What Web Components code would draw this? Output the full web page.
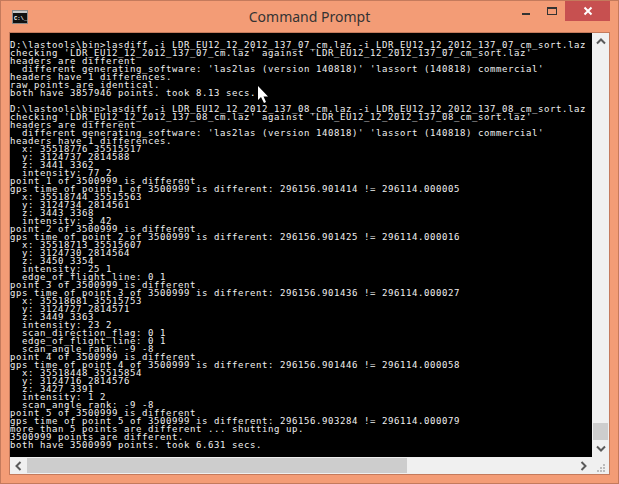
<!DOCTYPE html>
<html>
<head>
<meta charset="utf-8">
<title>Command Prompt</title>
<style>
  html, body { margin: 0; padding: 0; background: #f39c76; }
</style>
</head>
<body>
<template id="chrome-window-tpl">
  <style>
    :host {
      display: flex;
      flex-direction: column;
      box-sizing: border-box;
      position: relative;
      width: 619px;
      height: 484px;
      background: #f39c76;
      border: 1px solid #c47a5c;
      overflow: hidden;
    }
    .titlebar {
      height: 31px;
      display: grid;
      grid-template-columns: 1fr auto 1fr;
      align-items: start;
    }
    .icon { display: block; margin: 9px 0 0 11px; }
    .title {
      font: 14px/1 "Noto Sans", "Open Sans", sans-serif;
      color: #333;
      padding-top: 9px;
    }
    .buttons { justify-self: end; display: flex; margin-right: 8px; }
    .btn { width: 26px; height: 20px; display: flex; align-items: center; justify-content: center; }
    .btn.close { width: 45px; background: #c75050; }
    .client {
      flex: 1;
      margin: 0 8px 8px;
      border: 1px solid #c47a5c;
      min-height: 0;
    }
  </style>
  <div class="titlebar">
    <svg class="icon" width="16" height="14" viewBox="0 0 16 14">
      <rect x="0.5" y="0.5" width="15" height="13" fill="#111" stroke="#8a8a8a"/>
      <rect x="1" y="1" width="14" height="2" fill="#c8c8c8"/>
      <text x="2" y="10" font-family="Liberation Mono" font-size="5.5" font-weight="700" fill="#fff">C:\_</text>
    </svg>
    <div class="title"><slot name="title"></slot></div>
    <div class="buttons">
      <div class="btn">
        <svg width="10" height="10" viewBox="0 0 10 10"><rect x="1" y="7" width="8" height="2" fill="#333"/></svg>
      </div>
      <div class="btn">
        <svg width="12" height="10" viewBox="0 0 12 10"><rect x="1.5" y="1.5" width="9" height="7" fill="none" stroke="#333"/><rect x="1" y="1" width="10" height="2" fill="#333"/></svg>
      </div>
      <div class="btn close">
        <svg width="10" height="10" viewBox="0 0 10 10"><path d="M1.5 1.5 L8.5 8.5 M8.5 1.5 L1.5 8.5" stroke="#fff" stroke-width="2"/></svg>
      </div>
    </div>
  </div>
  <div class="client"><slot></slot></div>
</template>

<template id="console-pane-tpl">
  <style>
    :host {
      display: grid;
      grid-template-columns: 582px 17px;
      grid-template-rows: 424px 17px;
      background: #f0f0f0;
    }
    .grip { display: block; margin: 7px 0 0 5px; }
  </style>
  <slot></slot>
  <scroll-bar dir="v"></scroll-bar>
  <scroll-bar dir="h"></scroll-bar>
  <svg class="grip" width="9" height="9" viewBox="0 0 9 9" fill="#bcbcbc">
    <rect x="6" y="0" width="2" height="2"/>
    <rect x="3" y="3" width="2" height="2"/><rect x="6" y="3" width="2" height="2"/>
    <rect x="0" y="6" width="2" height="2"/><rect x="3" y="6" width="2" height="2"/><rect x="6" y="6" width="2" height="2"/>
  </svg>
</template>

<template id="console-text-tpl">
  <style>
    :host {
      display: block;
      background: #000;
      color: #f0f0f0;
      overflow: hidden;
      font: 9px/8px "DejaVu Sans Mono", "Liberation Mono", monospace;
      letter-spacing: 0.582px;
    }
    slot { white-space: pre; }
  </style>
  <slot></slot>
</template>

<template id="scroll-bar-tpl">
  <style>
    :host { display: flex; background: #f0f0f0; }
    :host([dir="v"]) { flex-direction: column; }
    .arrow { flex: 0 0 17px; height: 17px; width: 17px; display: flex; align-items: center; justify-content: center; }
    .track { flex: 1; display: flex; }
    :host([dir="v"]) .track { flex-direction: column; justify-content: flex-end; align-items: center; }
    .thumb { background: #cdcdcd; }
    :host([dir="v"]) .thumb { width: 15px; height: 17px; }
    :host([dir="h"]) .thumb { width: 380px; height: 15px; margin-top: 1px; }
  </style>
</template>

<template id="mouse-cursor-tpl">
  <style>
    :host { position: absolute; left: 257px; top: 85px; width: 11px; height: 18px; display: block; }
  </style>
  <svg width="11" height="18" viewBox="0 0 11 18"><path d="M0 0 L0 14 L3 11 L6 17 L8 16 L5.5 10.5 L10 10.5 Z" fill="#fff"/></svg>
</template>

<chrome-window>
  <span slot="title">Command Prompt</span>
  <console-pane>
    <console-text>
D:\lastools\bin&gt;lasdiff -i LDR_EU12_12_2012_137_07_cm.laz -i LDR_EU12_12_2012_137_07_cm_sort.laz
checking 'LDR_EU12_12_2012_137_07_cm.laz' against 'LDR_EU12_12_2012_137_07_cm_sort.laz'
headers are different
  different generating_software: 'las2las (version 140818)' 'lassort (140818) commercial'
headers have 1 differences.
raw points are identical.
both have 3857946 points. took 8.13 secs.

D:\lastools\bin&gt;lasdiff -i LDR_EU12_12_2012_137_08_cm.laz -i LDR_EU12_12_2012_137_08_cm_sort.laz
checking 'LDR_EU12_12_2012_137_08_cm.laz' against 'LDR_EU12_12_2012_137_08_cm_sort.laz'
headers are different
  different generating_software: 'las2las (version 140818)' 'lassort (140818) commercial'
headers have 1 differences.
  x: 35518776 35515517
  y: 3124737 2814588
  z: 3441 3362
  intensity: 77 2
point 1 of 3500999 is different
gps time of point 1 of 3500999 is different: 296156.901414 != 296114.000005
  x: 35518744 35515563
  y: 3124734 2814561
  z: 3443 3368
  intensity: 3 42
point 2 of 3500999 is different
gps time of point 2 of 3500999 is different: 296156.901425 != 296114.000016
  x: 35518713 35515607
  y: 3124730 2814564
  z: 3450 3354
  intensity: 25 1
  edge_of_flight_line: 0 1
point 3 of 3500999 is different
gps time of point 3 of 3500999 is different: 296156.901436 != 296114.000027
  x: 35518681 35515753
  y: 3124727 2814571
  z: 3449 3363
  intensity: 23 2
  scan_direction_flag: 0 1
  edge_of_flight_line: 0 1
  scan_angle_rank: -9 -8
point 4 of 3500999 is different
gps time of point 4 of 3500999 is different: 296156.901446 != 296114.000058
  x: 35518448 35515854
  y: 3124716 2814576
  z: 3427 3391
  intensity: 1 2
  scan_angle_rank: -9 -8
point 5 of 3500999 is different
gps time of point 5 of 3500999 is different: 296156.903284 != 296114.000079
more than 5 points are different ... shutting up.
3500999 points are different.
both have 3500999 points. took 6.631 secs.</console-text>
  </console-pane>
  <mouse-cursor></mouse-cursor>
</chrome-window>

<script>
  // every element just clones its own template into an open shadow root
  class TplElement extends HTMLElement {
    constructor(id) {
      super();
      this.attachShadow({ mode: "open" });
      this.shadowRoot.appendChild(document.getElementById(id).content.cloneNode(true));
    }
  }

  class ChromeWindow extends TplElement {
    constructor() { super("chrome-window-tpl"); }
  }

  class ConsolePane extends TplElement {
    constructor() { super("console-pane-tpl"); }
  }

  class ConsoleText extends TplElement {
    constructor() { super("console-text-tpl"); }
  }

  class MouseCursor extends TplElement {
    constructor() { super("mouse-cursor-tpl"); }
  }

  const chevrons = {
    up: "M1 6.5 L5 2.5 L9 6.5",
    down: "M1 2.5 L5 6.5 L9 2.5",
    left: "M6.5 1 L2.5 5 L6.5 9",
    right: "M2.5 1 L6.5 5 L2.5 9",
  };

  function arrow(name) {
    return `<div class="arrow"><svg width="10" height="10" viewBox="0 0 10 10"><path d="${chevrons[name]}" fill="none" stroke="#5a5a5a" stroke-width="2"/></svg></div>`;
  }

  class ScrollBar extends TplElement {
    constructor() { super("scroll-bar-tpl"); }

    connectedCallback() {
      const v = this.getAttribute("dir") === "v";
      const box = document.createElement("div");
      box.style.display = "contents";
      box.innerHTML =
        arrow(v ? "up" : "left") +
        `<div class="track"><div class="thumb"></div></div>` +
        arrow(v ? "down" : "right");
      this.shadowRoot.appendChild(box);
    }
  }

  customElements.define("chrome-window", ChromeWindow);
  customElements.define("console-pane", ConsolePane);
  customElements.define("console-text", ConsoleText);
  customElements.define("scroll-bar", ScrollBar);
  customElements.define("mouse-cursor", MouseCursor);
</script>
</body>
</html>
